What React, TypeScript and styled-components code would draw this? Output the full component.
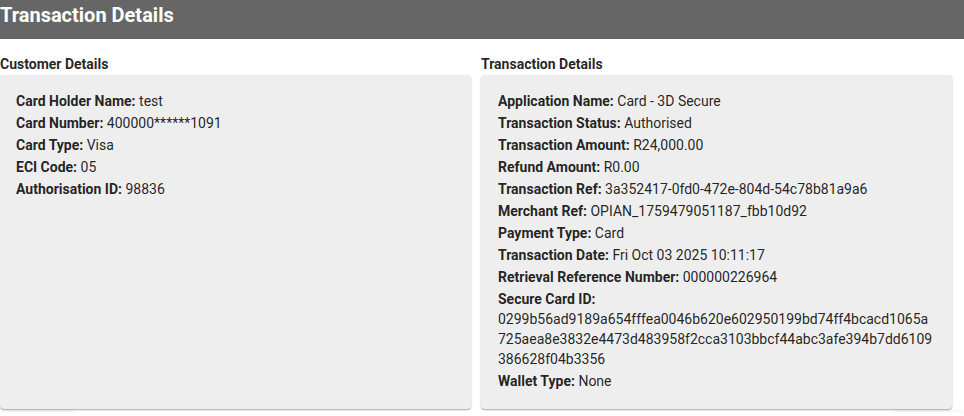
import React from "react";
import styled, { createGlobalStyle } from "styled-components";

const Global = createGlobalStyle`
  html, body { margin: 0; padding: 0; background: #fff; }
  body { font-family: Roboto, "Liberation Sans", Arial, sans-serif; color: rgba(0,0,0,0.87); }
  * { box-sizing: border-box; }
`;

const Page = styled.div`
  width: 964px;
  height: 416px;
  overflow: hidden;
`;

const Header = styled.header`
  height: 39px;
  background: #666666;
  display: flex;
  align-items: flex-start;
  padding-top: 3px;
`;

const Title = styled.h1`
  margin: 0;
  font-size: 20px;
  line-height: 24px;
  font-weight: 700;
  color: #ffffff;
`;

const Columns = styled.div`
  display: grid;
  grid-template-columns: 471px 471px;
  column-gap: 10px;
  padding-top: 15px;
`;

const Section = styled.section`
  display: flex;
  flex-direction: column;
`;

const SectionTitle = styled.h2`
  margin: 0;
  font-size: 14px;
  line-height: 20px;
  font-weight: 700;
  height: 21px;
`;

const Card = styled.div<{ $inset: number }>`
  background: #eeeeee;
  border-radius: 4px;
  box-shadow: 0 1px 2px rgba(0,0,0,0.25), 0 1px 1px rgba(0,0,0,0.12);
  height: 334px;
  padding: 16px 18px 16px ${(p) => p.$inset}px;
  display: flex;
  flex-direction: column;
`;

const Row = styled.div`
  font-size: 14px;
  line-height: 20px;
  margin-bottom: 2px;
  overflow-wrap: break-word;
`;

const Label = styled.span`
  font-weight: 700;
`;

const Footer = styled.div`
  display: flex;
  justify-content: space-between;
  padding: 3px 0 0;
`;

const FooterButton = styled.div<{ $w: number }>`
  width: ${(p) => p.$w}px;
  height: 36px;
  border-radius: 4px;
  background: #fff;
  box-shadow: 0 -1px 3px rgba(0,0,0,0.06);
`;

const customer: [string, string][] = [
  ["Card Holder Name:", "test"],
  ["Card Number:", "400000******1091"],
  ["Card Type:", "Visa"],
  ["ECI Code:", "05"],
  ["Authorisation ID:", "98836"],
];

const transaction: [string, string][] = [
  ["Application Name:", "Card - 3D Secure"],
  ["Transaction Status:", "Authorised"],
  ["Transaction Amount:", "R24,000.00"],
  ["Refund Amount:", "R0.00"],
  ["Transaction Ref:", "3a352417-0fd0-472e-804d-54c78b81a9a6"],
  ["Merchant Ref:", "OPIAN_1759479051187_fbb10d92"],
  ["Payment Type:", "Card"],
  ["Transaction Date:", "Fri Oct 03 2025 10:11:17"],
  ["Retrieval Reference Number:", "000000226964"],
  [
    "Secure Card ID:",
    "0299b56ad9189a654fffea0046b620e602950199bd74ff4bcacd1065a725aea8e3832e4473d483958f2cca3103bbcf44abc3afe394b7dd6109386628f04b3356",
  ],
  ["Wallet Type:", "None"],
];

export default function App() {
  return (
    <Page>
      <Global />
      <Header>
        <Title>Transaction Details</Title>
      </Header>
      <Columns>
        <Section>
          <SectionTitle>Customer Details</SectionTitle>
          <Card $inset={16}>
            {customer.map(([l, v]) => (
              <Row key={l}>
                <Label>{l}</Label> {v}
              </Row>
            ))}
          </Card>
        </Section>
        <Section>
          <SectionTitle>Transaction Details</SectionTitle>
          <Card $inset={17}>
            {transaction.map(([l, v]) => (
              <Row key={l}>
                <Label>{l}</Label> {v}
              </Row>
            ))}
          </Card>
        </Section>
      </Columns>
      <Footer>
        <FooterButton $w={75} />
        <FooterButton $w={70} />
      </Footer>
    </Page>
  );
}
